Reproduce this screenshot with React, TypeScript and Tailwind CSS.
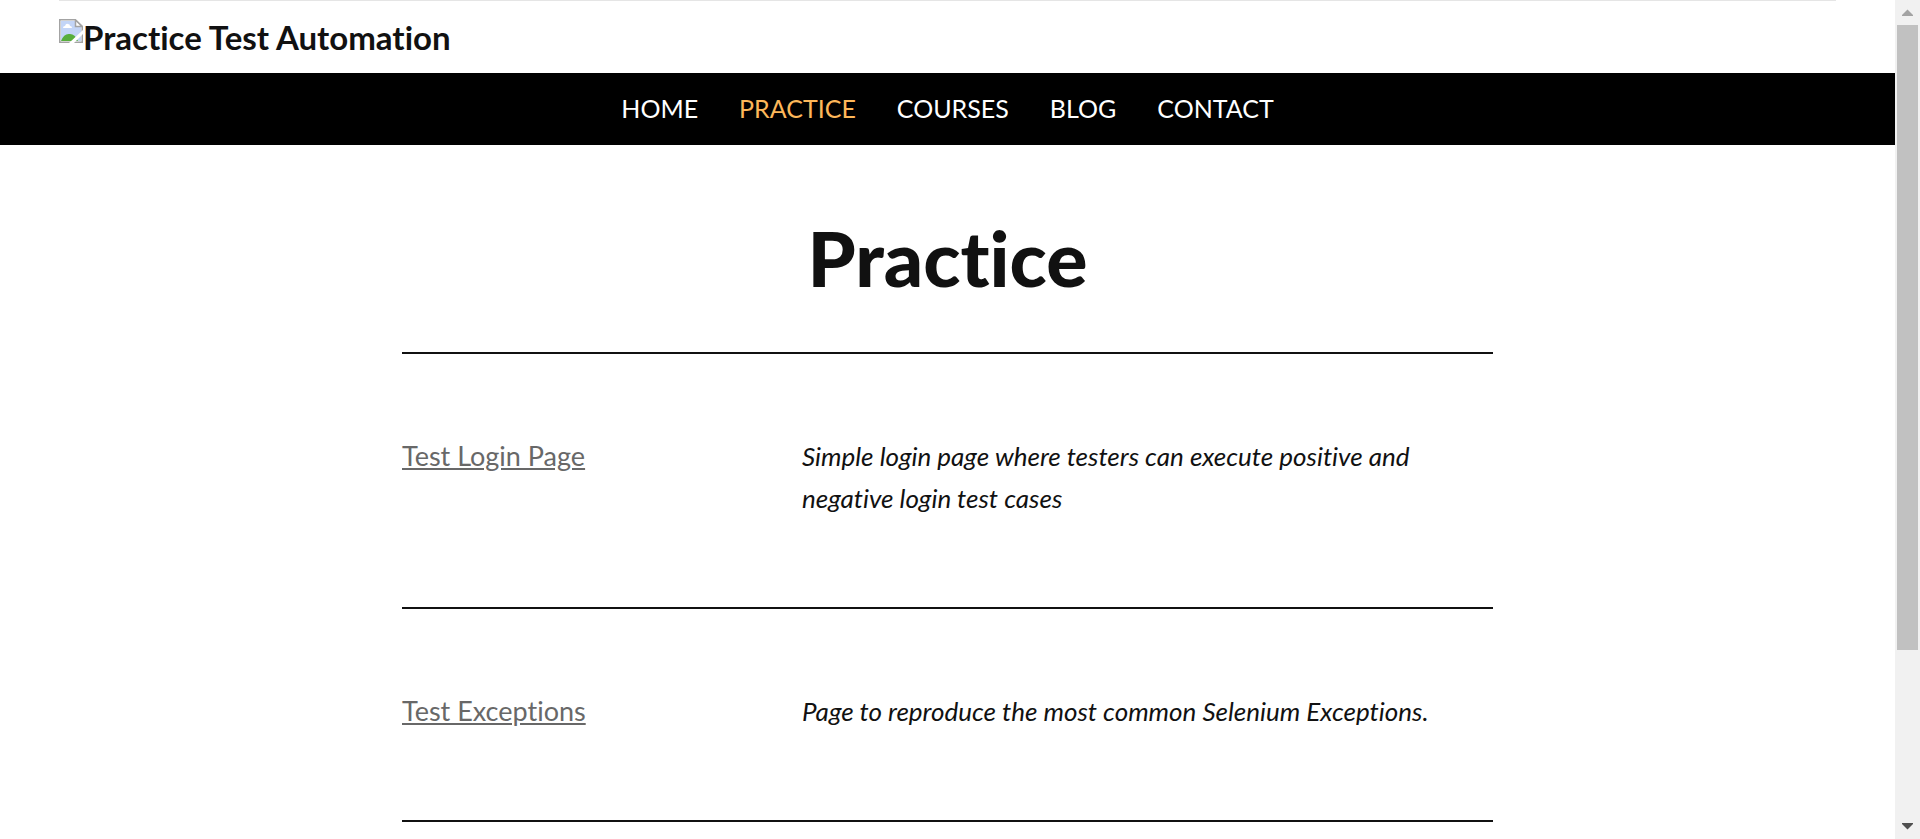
import React from "react";

const navItems = ["HOME", "PRACTICE", "COURSES", "BLOG", "CONTACT"];

const rows = [
  { title: "Test Login Page", text: "Simple login page where testers can execute positive and negative login test cases" },
  { title: "Test Exceptions", text: "Page to reproduce the most common Selenium Exceptions." },
];

function BrokenImage() {
  return (
    <svg className="mt-[2px] shrink-0" width="24" height="24" viewBox="0 0 24 24" aria-hidden="true">
      <path d="M.75 23.250V.75h15.500l7 6.500v16z" fill="#fff" stroke="#a3a3a3" strokeWidth="1.500" />
      <path d="M2 2h14v6h6v14H2z" fill="#c3d5f7" />
      <path d="M4 9q0-2 2-2 1-3 3-2 2 0 2 2 2 0 2 2z" fill="#fff" />
      <path d="M2 22q3-8 9-7 5 0 8 7z" fill="#57ae3c" />
      <path d="M16.500 1v6.500H23z" fill="#fff" stroke="#a3a3a3" strokeWidth="1.500" />
      <path d="M24 11v4l-9 9h-5z" fill="#fff" />
    </svg>
  );
}

function ScrollBar() {
  return (
    <div className="flex h-screen w-[25px] shrink-0 flex-col items-center bg-[#f1f1f1]" aria-hidden="true">
      <svg className="h-[25px] w-[25px] shrink-0" viewBox="0 0 25 25"><path d="M7 16v-1l5.500-5.500L18 15v1z" fill="#a3a3a3" /></svg>
      <div className="w-[21px] basis-[625px] bg-[#c1c1c1]" />
      <svg className="mt-auto h-[25px] w-[25px] shrink-0" viewBox="0 0 25 25"><path d="M7 9v1l5.500 5.500L18 10V9z" fill="#505050" /></svg>
    </div>
  );
}

export default function App() {
  return (
    <div className="flex h-screen overflow-hidden bg-white font-[Lato,sans-serif] text-[#111] [font-variant-ligatures:none]">
      <div className="min-w-0 flex-1">
        <header>
          <div className="mx-[59px] h-[73px] border-t border-[#e5e5e5] pt-[16px]">
            <a href="#" className="flex items-start text-[33px] leading-[40px] font-bold"><BrokenImage />Practice Test Automation</a>
          </div>
          <nav className="flex h-[72px] items-center justify-center gap-[41px] bg-black text-[25px] text-white">
            {navItems.map((item) => (
              <a key={item} href="#" className={item === "PRACTICE" ? "text-[#fdb75a]" : ""}>{item}</a>
            ))}
          </nav>
        </header>
        <main className="mx-auto w-full max-w-[1091px]">
          <h1 className="pt-[62px] pb-[45px] text-center text-[77px] leading-[100px] font-black">Practice</h1>
          {rows.map((row) => (
            <section key={row.title} className="grid grid-cols-[400px_1fr] border-t-2 border-[#111] pt-[81px] pb-[88px] leading-[42px]">
              <div className="text-[27px]"><a href="#" className="text-[#686868] underline">{row.title}</a></div>
              <p className="text-[26px] italic">{row.text}</p>
            </section>
          ))}
          <hr className="border-t-2 border-[#111]" />
        </main>
      </div>
      <ScrollBar />
    </div>
  );
}
